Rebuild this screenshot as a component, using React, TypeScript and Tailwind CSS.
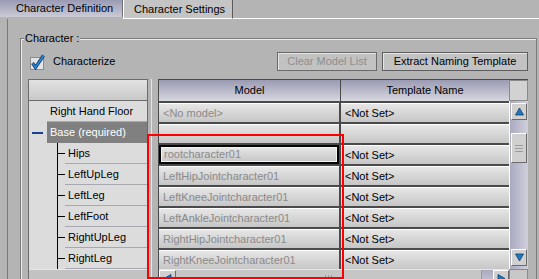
import clsx from "clsx";

type Row = {
  name: string;
  model: string;
  tpl: string;
  child?: boolean;
  group?: boolean;
  selected?: boolean;
};

const rows: Row[] = [
  { name: "Right Hand Floor", model: "<No model>", tpl: "<Not Set>" },
  { name: "Base (required)", model: "", tpl: "", group: true },
  { name: "Hips", model: "rootcharacter01", tpl: "<Not Set>", child: true, selected: true },
  { name: "LeftUpLeg", model: "LeftHipJointcharacter01", tpl: "<Not Set>", child: true },
  { name: "LeftLeg", model: "LeftKneeJointcharacter01", tpl: "<Not Set>", child: true },
  { name: "LeftFoot", model: "LeftAnkleJointcharacter01", tpl: "<Not Set>", child: true },
  { name: "RightUpLeg", model: "RightHipJointcharacter01", tpl: "<Not Set>", child: true },
  { name: "RightLeg", model: "RightKneeJointcharacter01", tpl: "<Not Set>", child: true },
];

const arrowPts = {
  up: "4.5,1 8.5,8 0.5,8",
  down: "0.5,1 8.5,1 4.5,8",
  left: "8,0.5 8,8.5 1,4.5",
  right: "1,0.5 1,8.5 8,4.5",
};

const Arrow = ({ dir }: { dir: keyof typeof arrowPts }) => (
  <svg width="9" height="9" viewBox="0 0 9 9">
    <polygon points={arrowPts[dir]} fill="#2378bd" stroke="#0f3f6e" strokeWidth="0.8" />
  </svg>
);

const ScrollBtn = ({ dir, className }: { dir: keyof typeof arrowPts; className?: string }) => (
  <div
    className={clsx(
      "flex items-center justify-center bg-[#d0d0d0] border border-t-white border-l-white border-r-[#6a6a6a] border-b-[#6a6a6a]",
      className
    )}
  >
    <Arrow dir={dir} />
  </div>
);

const Check = () => (
  <svg width="16" height="16" viewBox="0 0 16 16">
    <rect x="0.5" y="3.5" width="13" height="12" fill="#e4e4e4" stroke="#8c8c8c" />
    <path d="M2.5 9 L5.5 13.5 L13.5 1.5" fill="none" stroke="#0d3f78" strokeWidth="3.2" />
    <path d="M2.5 9 L5.5 13.5 L13.5 1.5" fill="none" stroke="#2f86d6" strokeWidth="1.6" />
  </svg>
);

const TreeRow = ({ r }: { r: Row }) => {
  if (!r.child) {
    return (
      <div className="h-[21px] flex">
        <div className="w-[18px] flex items-center pl-[3px]">
          {r.group && <div className="w-[11px] h-[2px] bg-[#1b3f8f]" />}
        </div>
        <div
          className={clsx(
            "flex-1 flex items-center pl-[3px] border-b",
            r.group ? "bg-[#808080] border-[#808080] text-white" : "border-[#a8a8b2]"
          )}
        >
          {r.name}
        </div>
      </div>
    );
  }
  return (
    <div className="h-[21px] flex">
      <div className="w-[28px]" />
      <div className="w-[8px] border-l border-black flex items-center">
        <div className="w-[7px] h-px bg-black" />
      </div>
      <div className="flex-1 flex items-center pl-[3px] border-b border-[#a8a8b2]">{r.name}</div>
    </div>
  );
};

const grad = "bg-linear-to-b from-[#e6e6e6] to-[#c6c6c6] flex items-center";

export default function App() {
  return (
    <div className="relative w-[539px] h-[279px] overflow-hidden bg-[#b4b4b4] text-[11px] leading-[13px] text-black font-['Liberation_Sans',Arial,sans-serif]">
      <div className="flex h-[19px]">
        <div className="w-[123px] h-[17px] bg-linear-to-b from-[#9a9ab4] to-[#cbcbd6] border-r border-[#707078] pl-[16px] pt-[2px] whitespace-nowrap">
          Character Definition
        </div>
        <div className="w-[110px] h-[19px] bg-[#c4c4c4] border-l border-white border-r border-r-[#5c5c5c] border-b border-b-white pl-[10px] pt-[3px] whitespace-nowrap">
          Character Settings
        </div>
        <div className="flex-1 border-b border-white" />
      </div>

      <div className="ml-[7px] h-[260px] border-l border-[#7a7a7a] pl-[12px] pt-[13px]">
        <fieldset className="w-[517px] h-[300px] border border-[#7c7c7c] shadow-[inset_1px_1px_0_#ececec]">
          <legend className="ml-[3px] px-[1px] bg-[#b4b4b4]">Character :</legend>

          <div className="mt-[7px] pl-[9px] pr-[8px] h-[19px] flex items-center justify-between">
            <div className="flex items-center gap-[7px]">
              <Check />
              <span>Characterize</span>
            </div>
            <div className="flex gap-[5px]">
              <div className="w-[100px] h-[19px] flex items-center justify-center border border-[#6a6a6a] bg-[#c2c2c2] shadow-[inset_1px_1px_0_#e6e6e6] text-[#8e8e8e]">
                Clear Model List
              </div>
              <div className="w-[146px] h-[19px] flex items-center justify-center border border-[#5e5e5e] bg-[#c2c2c2] shadow-[inset_1px_1px_0_#e6e6e6]">
                Extract Naming Template
              </div>
            </div>
          </div>

          <div className="mt-[8px] pl-[7px] h-[220px] flex">
            {/* tree */}
            <div className="w-[120px] border border-[#6c6c6c] bg-[#dcdcdc] flex flex-col">
              <div className="h-[21px] border-b border-[#6c6c6c] bg-linear-to-b from-[#e2e2e2] to-[#c8c8c8]" />
              {rows.map((r) => (
                <TreeRow key={r.name} r={r} />
              ))}
              <div className="flex-1 border-t border-[#e8e8e8] bg-[#c2c2c2]" />
            </div>

            {/* splitter */}
            <div className="w-[10px] pl-[3px]">
              <div className="w-px h-full bg-[#e4e4e4]" />
            </div>

            {/* grid */}
            <div className="w-[351px] border-l border-t border-[#4a4a4a] flex flex-col">
              <div className="h-[21px] flex gap-px bg-[#4a4a4a]">
                <div className="w-[181px] flex items-center justify-center bg-linear-to-b from-[#9a9ab3] to-[#d8d8e0]">
                  Model
                </div>
                <div className="flex-1 flex items-center justify-center bg-linear-to-b from-[#9a9ab3] to-[#d8d8e0]">
                  Template Name
                </div>
              </div>
              {rows.map((r) => (
                <div key={r.name} className="h-[21px] pt-[2px] flex gap-[2px] bg-[#4a4a4a]">
                  {r.selected ? (
                    <div className={clsx(grad, "w-[180px] text-[#8a8a8a] border-2 border-[#050505] shadow-[inset_0_0_0_1px_#f2f2f2] pl-[3px]")}>
                      {r.model}
                    </div>
                  ) : (
                    <div className={clsx(grad, "w-[180px] text-[#8a8a8a] border-t border-white pl-[4px]")}>
                      {r.model}
                    </div>
                  )}
                  <div className={clsx(grad, "flex-1 border-t border-white pl-[4px]")}>{r.tpl}</div>
                </div>
              ))}
              <div className="h-[18px] flex bg-[#c4c4c4] border-t border-[#e6e6e6]">
                <ScrollBtn dir="left" className="w-[17px] h-[16px]" />
                <div className="flex-1 flex items-center justify-center bg-[#c6c6c6] border-r border-[#9a9a9a]">
                  <div className="flex gap-[2px] h-[8px]">
                    <div className="w-px bg-[#9c9c9c]" />
                    <div className="w-px bg-[#9c9c9c]" />
                    <div className="w-px bg-[#9c9c9c]" />
                  </div>
                </div>
                <div className="w-[11px] bg-linear-to-b from-[#a8a8c0] to-[#d0d0dc]" />
                <ScrollBtn dir="right" className="w-[16px] h-[16px]" />
              </div>
            </div>

            {/* vertical scroll */}
            <div className="w-[19px] border-t border-[#4a4a4a] flex flex-col">
              <div className="h-[21px] bg-[#d2d2d2] border border-[#8a8a8a]" />
              <div className="h-[168px] flex flex-col items-center bg-linear-to-r from-[#a9a9c1] to-[#d0d0dc] border-l border-white pt-[2px]">
                <ScrollBtn dir="up" className="w-[16px] h-[17px]" />
                <div className="mt-[13px] w-[16px] h-[30px] bg-[#d0d0d0] border border-t-white border-l-white border-r-[#6a6a6a] border-b-[#6a6a6a] flex flex-col items-center justify-center gap-[2px]">
                  <div className="w-[8px] h-px bg-[#9c9c9c]" />
                  <div className="w-[8px] h-px bg-[#9c9c9c]" />
                  <div className="w-[8px] h-px bg-[#9c9c9c]" />
                </div>
                <div className="flex-1" />
                <ScrollBtn dir="down" className="w-[16px] h-[17px] mb-[3px]" />
              </div>
              <div className="h-[18px] bg-[#c8c8c8] border border-[#8a8a8a]" />
            </div>
          </div>
        </fieldset>
      </div>

      <div className="absolute left-[147px] top-[134px] w-[197px] h-[145px] border-2 border-[#ff0000]" />
    </div>
  );
}
